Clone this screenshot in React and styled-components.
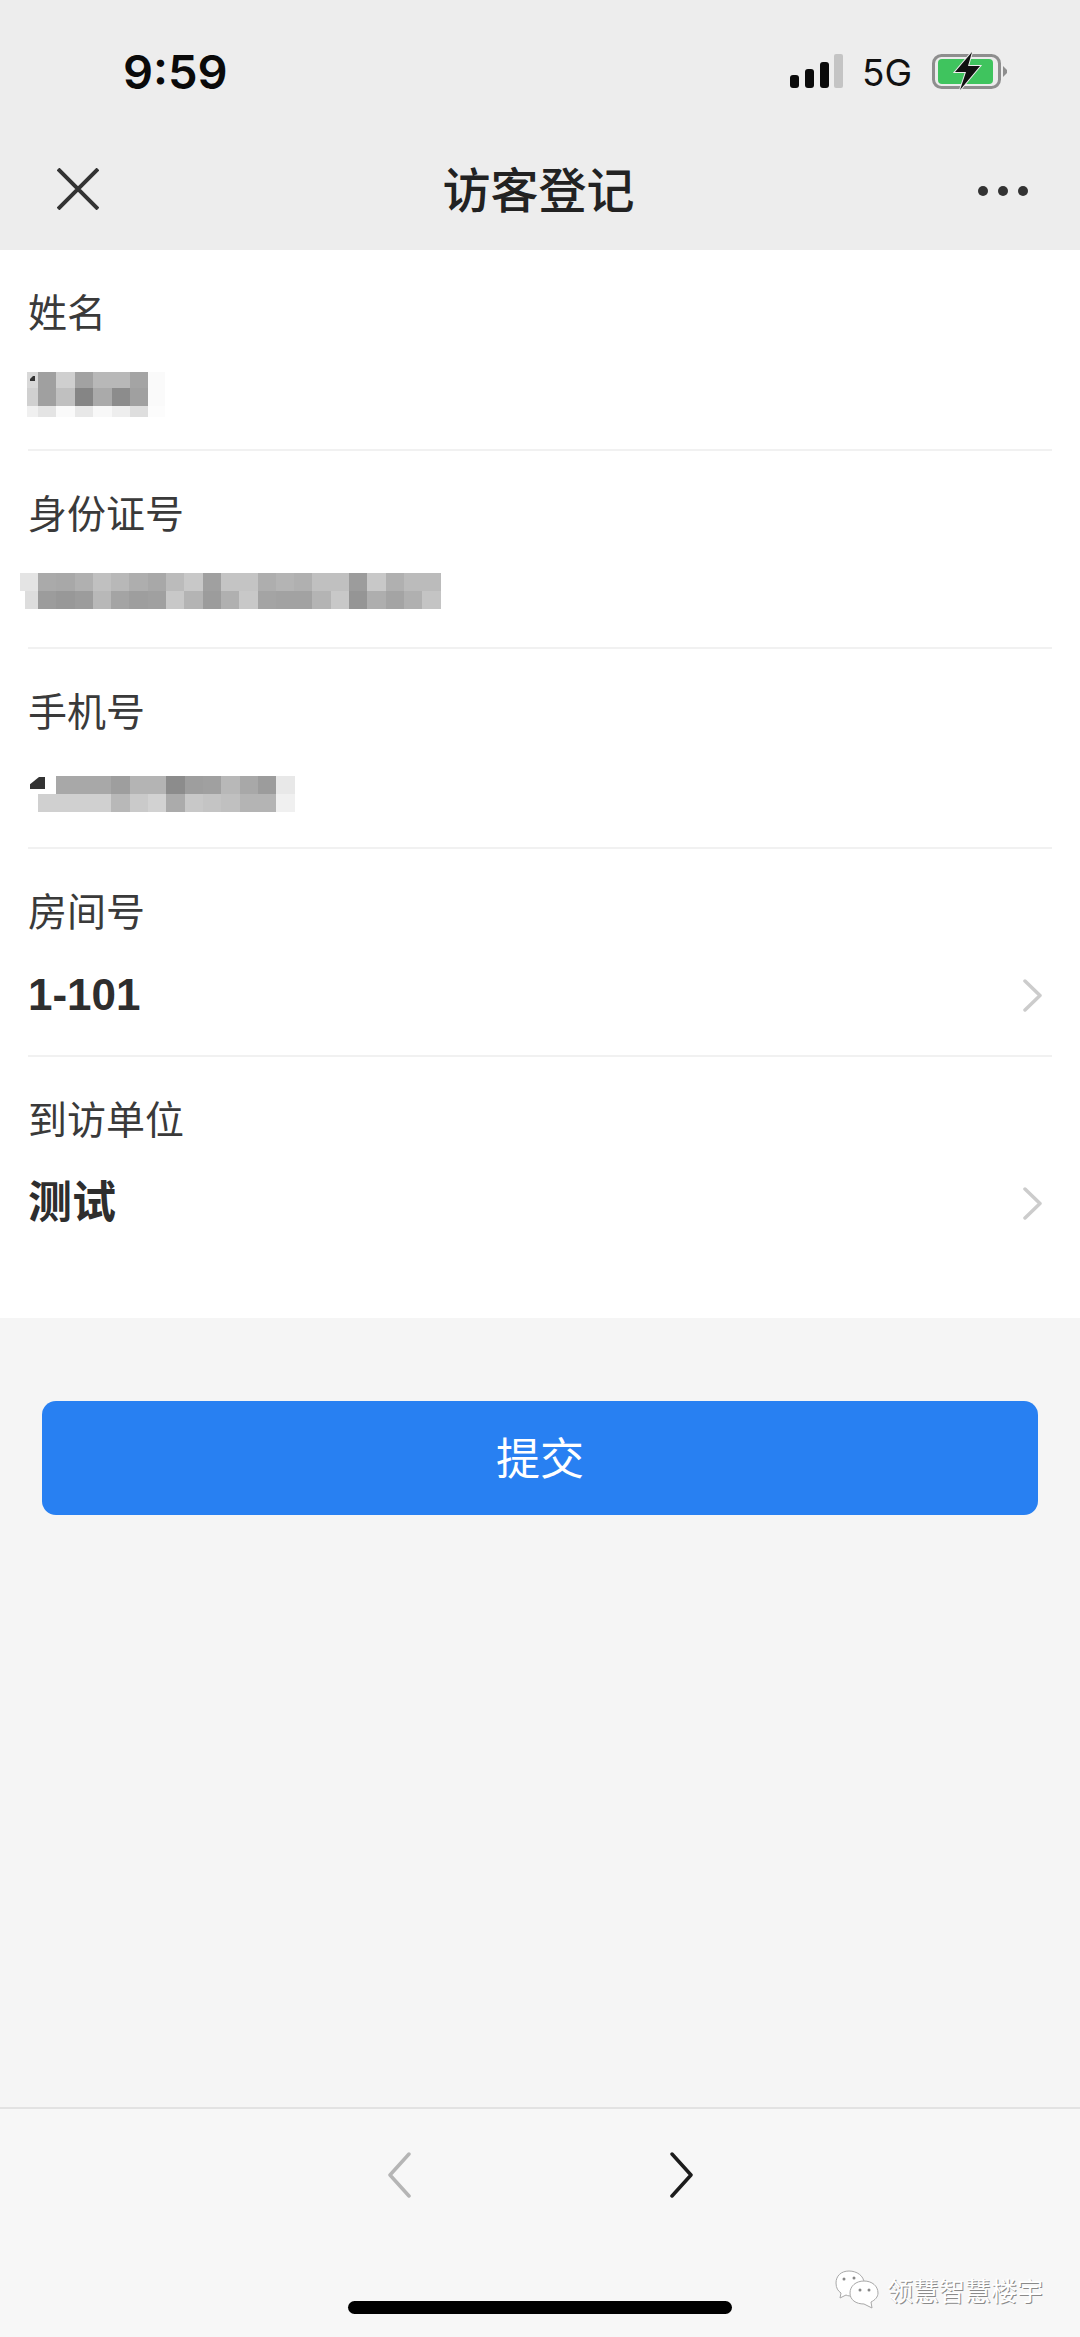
import React from 'react'
import styled, { createGlobalStyle } from 'styled-components'

const CJK = `"Noto Sans CJK SC", "Noto Sans", sans-serif`

const GlobalStyle = createGlobalStyle`
    * {
        box-sizing: border-box;
    }
    html, body {
        margin: 0;
        padding: 0;
        background: #f5f5f5;
    }
`

const Page = styled.div`
    width: 1080px;
    height: 2337px;
    display: flex;
    flex-direction: column;
    overflow: hidden;
    font-family: ${CJK};
    color: #333;
`

const Header = styled.header`
    background: #ededed;
    flex-shrink: 0;
`

const StatusBar = styled.div`
    height: 132px;
    padding: 10px 73px 0 123px;
    display: flex;
    align-items: center;
    justify-content: space-between;
`

const Time = styled.span`
    font-family: Inter, sans-serif;
    font-size: 47px;
    font-weight: 600;
    color: #0a0a0a;
    line-height: 1;
`

const StatusRight = styled.div`
    display: flex;
    align-items: center;
`

const Network = styled.span`
    font-family: Inter, sans-serif;
    font-size: 37px;
    color: #111;
    line-height: 1;
    margin: 2px 20px 0 19px;
`

const NavBar = styled.div`
    height: 118px;
    padding: 0 60px 0 57px;
    display: grid;
    grid-template-columns: 1fr auto 1fr;
    align-items: center;
`

const Title = styled.h1`
    margin: 0 0 8px;
    font-size: 48px;
    font-weight: 500;
    color: #222;
    line-height: 1;
`

const NavEnd = styled.div`
    display: flex;
    justify-content: flex-end;
    margin-right: -8px;
`

const Form = styled.section`
    background: #fff;
    height: 1068px;
    padding: 0 28px;
    flex-shrink: 0;
`

const Field = styled.div`
    height: ${p => p.$height}px;
    padding-top: 35px;
    border-bottom: ${p => (p.$last ? 'none' : '2px solid #f1f1f1')};
`

const Label = styled.div`
    font-size: 39px;
    line-height: 50px;
    color: #3a3a3a;
`

const ValueRow = styled.div`
    display: flex;
    align-items: center;
    justify-content: space-between;
    margin-top: 36px;
    padding-right: 10px;
`

const Value = styled.div`
    font-family: "Liberation Sans", ${CJK};
    font-size: 44px;
    font-weight: 700;
    line-height: 50px;
    color: #2e2e2e;
`

const Mosaic = styled.div`
    position: relative;
    display: grid;
    grid-template-columns: ${p => p.$cols};
    grid-template-rows: ${p => p.$rows};
    width: max-content;
    margin-top: ${p => p.$top}px;
    margin-left: ${p => p.$left}px;
`

const Tile = styled.i`
    display: block;
    background: ${p => p.$shade};
    margin-left: ${p => p.$inset || 0}px;
`

const Speck = styled.b`
    position: absolute;
    left: ${p => p.$x}px;
    top: ${p => p.$y}px;
    width: ${p => p.$w}px;
    height: ${p => p.$h}px;
    background: #333;
    clip-path: polygon(60% 0, 100% 0, 100% 100%, 0 100%, 0 60%);
`

const Main = styled.main`
    flex: 1;
    background: #f5f5f5;
    padding: 83px 42px 0;
`

const Submit = styled.button`
    display: block;
    width: 100%;
    height: 114px;
    border: 0;
    border-radius: 14px;
    padding: 0 0 4px;
    background: #2880f2;
    color: #fff;
    font-family: ${CJK};
    font-size: 44px;
    font-weight: 400;
`

const Toolbar = styled.footer`
    position: relative;
    height: 230px;
    flex-shrink: 0;
    background: #f7f7f7;
    border-top: 2px solid #e2e2e2;
    padding-top: 43px;
    display: flex;
    flex-direction: column;
    align-items: center;
`

const Arrows = styled.div`
    display: flex;
    gap: 259px;
`

const HomeBar = styled.div`
    width: 384px;
    height: 13px;
    margin-top: 103px;
    border-radius: 7px;
    background: #000;
`

const Watermark = styled.div`
    position: absolute;
    left: 835px;
    top: 161px;
    display: flex;
    align-items: center;
    gap: 8px;
`

const WatermarkText = styled.span`
    font-size: 26px;
    line-height: 32px;
    color: #fff;
    text-shadow: 1px 1px 0 #8a8a8a;
    white-space: nowrap;
`

const CloseIcon = () => (
    <svg width="42" height="42" viewBox="0 0 42 42" fill="none" stroke="#333" strokeWidth="4">
        <path d="M1 1 L41 41 M41 1 L1 41" />
    </svg>
)

const MoreIcon = () => (
    <svg width="50" height="12" viewBox="0 0 50 12" fill="#333">
        <circle cx="5" cy="6" r="5" />
        <circle cx="25" cy="6" r="5" />
        <circle cx="45" cy="6" r="5" />
    </svg>
)

const SignalIcon = () => (
    <svg width="53" height="34" viewBox="0 0 53 34">
        <rect x="0" y="21" width="9" height="13" rx="3" fill="#0a0a0a" />
        <rect x="15" y="15" width="9" height="19" rx="3" fill="#0a0a0a" />
        <rect x="30" y="8" width="9" height="26" rx="3" fill="#0a0a0a" />
        <rect x="44" y="0" width="9" height="34" rx="2" fill="#c4c4c4" />
    </svg>
)

const BatteryIcon = () => (
    <svg width="75" height="38" viewBox="0 0 75 38">
        <rect x="1.5" y="3.5" width="66" height="32" rx="8" fill="#ececec" stroke="#8e8e8e" strokeWidth="3" />
        <rect x="6" y="7" width="55" height="25" rx="4" fill="#3fc45e" />
        <path d="M71 14 L75 18 L75 21 L71 25 Z" fill="#8e8e8e" />
        <path
            d="M40 0 L23 20 L34 20 L28 38 L48 14 L36 14 Z"
            fill="#111"
            stroke="#ececec"
            strokeWidth="2"
            paintOrder="stroke"
        />
    </svg>
)

const Chevron = ({ color = '#ccc', width = 19, height = 33, stroke = 3.5, left }) => (
    <svg
        width={width}
        height={height}
        viewBox={`0 0 ${width} ${height}`}
        fill="none"
        stroke={color}
        strokeWidth={stroke}
        strokeLinecap="round"
        strokeLinejoin="round"
    >
        {left ? (
            <path d={`M${width - 2} 2 L2 ${height / 2} L${width - 2} ${height - 2}`} />
        ) : (
            <path d={`M2 2 L${width - 2} ${height / 2} L2 ${height - 2}`} />
        )}
    </svg>
)

const ChatIcon = () => (
    <svg width="44" height="40" viewBox="0 0 44 40" fill="#fff" stroke="#a8a8a8" strokeWidth="1">
        <path d="M14 1 C6 1 1 6 1 13 C1 18 3 21 6 23 L5 28 L11 25 C13 26 15 26 17 26 C25 26 29 20 29 13 C29 6 22 1 14 1 Z" />
        <path d="M29 11 C21 11 15 16 15 23 C15 30 21 34 29 34 L37 38 L36 32 C40 30 43 27 43 23 C43 16 37 11 29 11 Z" />
        <circle cx="9" cy="9" r="1.5" fill="#888" stroke="none" />
        <circle cx="19" cy="8" r="1.5" fill="#888" stroke="none" />
        <circle cx="25" cy="20" r="1.5" fill="#888" stroke="none" />
        <circle cx="34" cy="20" r="1.5" fill="#888" stroke="none" />
    </svg>
)

const nameShades = [
    '#d8d8d8', '#a0a0a0', '#cfcfcf', '#a2a2a2', '#b8b8b8', '#b8b8b8', '#a4a4a4', '#fafafa',
    '#d0d0d0', '#a0a0a0', '#c0c0c0', '#858585', '#aaaaaa', '#8c8c8c', '#a0a0a0', '#fafafa',
    '#f0f0f0', '#e4e4e4', '#fafafa', '#e8e8e8', '#f8f8f8', '#eeeeee', '#dedede', '#fcfcfc',
]

const idShades = [
    '#e4e4e4', '#aaaaaa', '#a8a8a8', '#b0b0b0', '#c0c0c0', '#b8b8b8', '#aeaeae', '#a8a8a8',
    '#bbbbbb', '#c8c8c8', '#a0a0a0', '#c4c4c4', '#c4c4c4', '#aeaeae', '#b4b4b4', '#b0b0b0',
    '#c0c0c0', '#c0c0c0', '#9c9c9c', '#c8c8c8', '#b0b0b0', '#bbbbbb', '#bbbbbb',
    '#dddddd', '#9c9c9c', '#989898', '#9c9c9c', '#b8b8b8', '#a4a4a4', '#9e9e9e', '#a0a0a0',
    '#c8c8c8', '#b4b4b4', '#9c9c9c', '#b0b0b0', '#c8c8c8', '#a4a4a4', '#a2a2a2', '#a2a2a2',
    '#b4b4b4', '#c8c8c8', '#959595', '#aeaeae', '#a4a4a4', '#b0b0b0', '#c4c4c4',
]

const phoneShades = [
    '#ffffff', '#a8a8a8', '#a8a8a8', '#a8a8a8', '#9e9e9e', '#b4b4b4', '#b4b4b4', '#8c8c8c',
    '#9e9e9e', '#a0a0a0', '#b8b8b8', '#a8a8a8', '#9c9c9c', '#e8e8e8',
    '#d0d0d0', '#d0d0d0', '#d0d0d0', '#d0d0d0', '#b8b8b8', '#cacaca', '#d2d2d2', '#ababab',
    '#c8c8c8', '#c4c4c4', '#c0c0c0', '#b4b4b4', '#b4b4b4', '#f0f0f0',
]

const App = () => {
    return (
        <Page>
            <GlobalStyle />
            <Header>
                <StatusBar>
                    <Time>9:59</Time>
                    <StatusRight>
                        <SignalIcon />
                        <Network>5G</Network>
                        <BatteryIcon />
                    </StatusRight>
                </StatusBar>
                <NavBar>
                    <div>
                        <CloseIcon />
                    </div>
                    <Title>访客登记</Title>
                    <NavEnd>
                        <MoreIcon />
                    </NavEnd>
                </NavBar>
            </Header>
            <Form>
                <Field $height={201}>
                    <Label>姓名</Label>
                    <Mosaic $cols="11px repeat(6, 18.4px) 17px" $rows="16px 18px 11px" $top={37} $left={-1}>
                        {nameShades.map((shade, i) => <Tile key={i} $shade={shade} />)}
                        <Speck $x={3} $y={4} $w={5} $h={5} />
                    </Mosaic>
                </Field>
                <Field $height={198}>
                    <Label>身份证号</Label>
                    <Mosaic $cols="18px repeat(22, 18.3px)" $rows="18px 18px" $top={37} $left={-8}>
                        {idShades.map((shade, i) => <Tile key={i} $shade={shade} $inset={i === 23 ? 5 : 0} />)}
                    </Mosaic>
                </Field>
                <Field $height={200}>
                    <Label>手机号</Label>
                    <Mosaic $cols="repeat(14, 18.35px)" $rows="18px 18px" $top={42} $left={10}>
                        {phoneShades.map((shade, i) => <Tile key={i} $shade={shade} />)}
                        <Speck $x={-8} $y={1} $w={15} $h={12} />
                    </Mosaic>
                </Field>
                <Field $height={208}>
                    <Label>房间号</Label>
                    <ValueRow>
                        <Value>1-101</Value>
                        <Chevron />
                    </ValueRow>
                </Field>
                <Field $height={261} $last>
                    <Label>到访单位</Label>
                    <ValueRow>
                        <Value>测试</Value>
                        <Chevron />
                    </ValueRow>
                </Field>
            </Form>
            <Main>
                <Submit>提交</Submit>
            </Main>
            <Toolbar>
                <Arrows>
                    <Chevron left color="#b5b5b5" width={23} height={46} stroke={3.5} />
                    <Chevron color="#1c1c1c" width={23} height={46} stroke={3.5} />
                </Arrows>
                <HomeBar />
                <Watermark>
                    <ChatIcon />
                    <WatermarkText>领慧智慧楼宇</WatermarkText>
                </Watermark>
            </Toolbar>
        </Page>
    )
}

export default App
